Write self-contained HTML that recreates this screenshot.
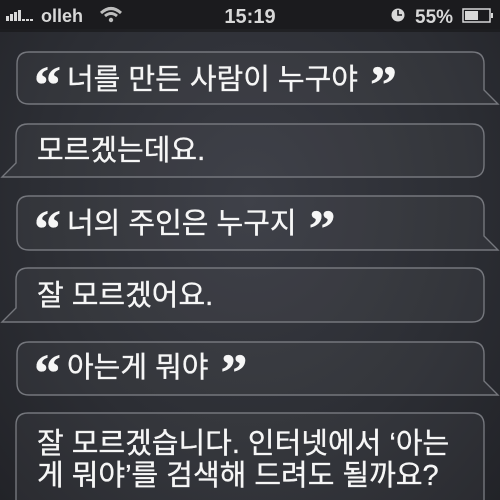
<!DOCTYPE html>
<html><head><meta charset="utf-8"><style>
html,body{margin:0;padding:0;width:500px;height:500px;overflow:hidden;background:#2d2f36}
body{background:radial-gradient(ellipse at 50% 40%,#383a42 0%,#2c2e34 60%,#222328 100%)}
svg{display:block}
.t{font-family:"Liberation Sans","Noto Sans CJK KR",sans-serif;font-size:29px;fill:#f6f6f6;stroke:#f6f6f6;stroke-width:0.35}
.q{font-family:"Liberation Serif",serif;font-weight:bold;font-size:54px}
.s{font-family:"Liberation Sans",sans-serif;font-weight:bold;fill:#d8d8d8}
</style></head><body>
<svg width="500" height="500" viewBox="0 0 500 500">
<rect x="0" y="0" width="500" height="29" fill="#1b1b1e"/>
<rect x="0" y="29" width="500" height="3" fill="#151517" opacity=".6"/>
<rect x="6" y="16" width="3" height="5" fill="#d8d8d8"/>
<rect x="10" y="14" width="3" height="7" fill="#d8d8d8"/>
<rect x="14" y="12" width="3" height="9" fill="#d8d8d8"/>
<rect x="18" y="10" width="3" height="11" fill="#d8d8d8"/>
<rect x="22" y="19" width="3" height="2" fill="#d8d8d8"/>
<rect x="26" y="19" width="3" height="2" fill="#d8d8d8"/>
<rect x="30" y="19" width="3" height="2" fill="#d8d8d8"/>
<text x="41" y="22" class="s" font-size="18">olleh</text>
<path d="M101 13 Q111 4 121 13" stroke="#bdbdbd" stroke-width="3" fill="none"/>
<path d="M105 16 Q111 11 117 16" stroke="#bdbdbd" stroke-width="3" fill="none"/>
<circle cx="111" cy="20" r="2.2" fill="#bdbdbd"/>
<text x="250" y="23" class="s" font-size="20" text-anchor="middle">15:19</text>
<circle cx="398" cy="15" r="6.5" fill="#d8d8d8"/>
<path d="M398 10 V15 H402" stroke="#1b1b1e" stroke-width="1.6" fill="none"/>
<text x="415" y="23" class="s" font-size="19">55%</text>
<rect x="463" y="9" width="27" height="13" fill="none" stroke="#d8d8d8" stroke-width="1.5"/>
<rect x="465" y="11" width="13" height="9" fill="#d8d8d8"/>
<rect x="491" y="13" width="2" height="5" fill="#d8d8d8"/>
<g fill="rgba(255,255,255,0.04)" stroke="#75777d" stroke-width="1.4">
<path d="M29 52 H472 Q484 52 484 64 V90 L498 104 H29 Q17 104 17 92 V64 Q17 52 29 52 Z"/>
<path d="M28 124 H472 Q484 124 484 136 V165 Q484 177 472 177 H2 L16 163 V136 Q16 124 28 124 Z"/>
<path d="M29 196 H472 Q484 196 484 208 V236 L498 250 H29 Q17 250 17 238 V208 Q17 196 29 196 Z"/>
<path d="M28 268 H472 Q484 268 484 280 V310 Q484 322 472 322 H2 L16 308 V280 Q16 268 28 268 Z"/>
<path d="M29 342 H472 Q484 342 484 354 V381 L498 395 H29 Q17 395 17 383 V354 Q17 342 29 342 Z"/>
<path d="M28 413 H472 Q484 413 484 425 V520 H16 V425 Q16 413 28 413 Z"/>
</g>
<text x="34" y="89" class="t"><tspan class="q" dy="14">“</tspan><tspan dx="6" dy="-14">너를 만든 사람이 누구야</tspan><tspan class="q" dx="12" dy="14">”</tspan></text>
<text x="37" y="160" class="t">모르겠는데요.</text>
<text x="34" y="233" class="t"><tspan class="q" dy="14">“</tspan><tspan dx="6" dy="-14">너의 주인은 누구지</tspan><tspan class="q" dx="12" dy="14">”</tspan></text>
<text x="37" y="305" class="t">잘 모르겠어요.</text>
<text x="34" y="377" class="t"><tspan class="q" dy="14">“</tspan><tspan dx="6" dy="-14">아는게 뭐야</tspan><tspan class="q" dx="12" dy="14">”</tspan></text>
<text x="37" y="453" class="t">잘 모르겠습니다. 인터넷에서 ‘아는</text>
<text x="37" y="485" class="t">게 뭐야’를 검색해 드려도 될까요?</text>
</svg>
</body></html>
